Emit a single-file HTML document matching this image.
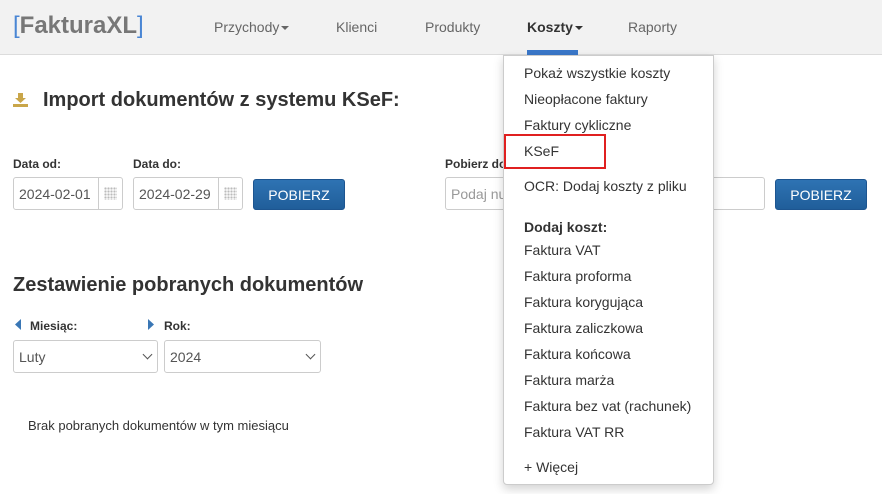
<!DOCTYPE html>
<html><head><meta charset="utf-8"><style>
*{box-sizing:border-box;margin:0;padding:0}
body{width:882px;height:494px;overflow:hidden;background:#fff;font-family:"Liberation Sans",Arial,sans-serif;color:#333;position:relative}
.a{position:absolute;white-space:nowrap}
.nav{position:absolute;left:0;top:0;width:882px;height:55px;background:#f2f2f2;border-bottom:1px solid #dcdcdc}
.nl{font-size:14px;color:#666;top:19px}
.caret{display:inline-block;width:0;height:0;border-left:4px solid transparent;border-right:4px solid transparent;border-top:4px solid #666;vertical-align:middle;margin-left:2px}
.lbl{font-size:12px;font-weight:bold;color:#333}
.inp{position:absolute;height:33px;border:1px solid #ccc;border-radius:3px;background:#fff;font-size:14px;color:#555;padding:8px 5px}
.btn{position:absolute;height:31px;border-radius:3px;background:linear-gradient(#2e73b3,#205e9a);color:#fff;font-size:14px;text-align:center;line-height:31px;border:1px solid #1d5590}
.cal{position:absolute;right:0;top:0;width:24px;height:31px;border-left:1px solid #ccc;background:radial-gradient(circle,#bbb 1px,transparent 1.3px) 5px 9px/3px 3px;background-repeat:repeat;background-clip:content-box;padding:9px 5px}
.dd{position:absolute;left:503px;top:55px;width:211px;height:430px;background:#fff;border:1px solid #ccc;border-radius:0 0 4px 4px;box-shadow:0 4px 10px rgba(0,0,0,.18)}
.di{position:absolute;left:20px;font-size:14px;color:#333}
.sel{position:absolute;height:33px;border:1px solid #ccc;border-radius:3px;font-size:14px;color:#555;padding:8px 5px}
.chev{position:absolute;right:6px;top:10px;width:7px;height:7px;border-right:1.5px solid #555;border-bottom:1.5px solid #555;transform:rotate(45deg)}
</style></head><body>
<div class="nav"></div>
<div class="a" style="left:13px;top:12px;font-size:24px;font-weight:bold;color:#777"><span style="color:#4a86d4;font-weight:normal">[</span>FakturaXL<span style="color:#4a86d4;font-weight:normal">]</span></div>
<div class="a nl" style="left:214px">Przychody<span class="caret"></span></div>
<div class="a nl" style="left:336px">Klienci</div>
<div class="a nl" style="left:425px">Produkty</div>
<div class="a nl" style="left:527px;color:#333;font-weight:bold">Koszty<span class="caret" style="border-top-color:#333"></span></div>
<div class="a nl" style="left:628px">Raporty</div>
<div class="a" style="left:527px;top:50px;width:51px;height:5px;background:#3a77c9"></div>

<svg class="a" style="left:13px;top:93px" width="15" height="14" viewBox="0 0 15 14"><path d="M5 0h5v5h3l-5.5 5L2 5h3z" fill="#c9a64a"/><rect x="0" y="11" width="15" height="3" fill="#c9a64a"/></svg>
<div class="a" style="left:43px;top:89px;font-size:20px;font-weight:bold;color:#333">Import dokumentów z systemu KSeF:</div>

<div class="a lbl" style="left:13px;top:157px">Data od:</div>
<div class="a lbl" style="left:133px;top:157px">Data do:</div>
<div class="a lbl" style="left:445px;top:157px">Pobierz do</div>
<div class="inp" style="left:13px;top:177px;width:110px">2024-02-01<div class="cal"></div></div>
<div class="inp" style="left:133px;top:177px;width:110px">2024-02-29<div class="cal"></div></div>
<div class="btn" style="left:253px;top:179px;width:92px">POBIERZ</div>
<div class="inp" style="left:445px;top:177px;width:320px;color:#999">Podaj nu</div>
<div class="btn" style="left:775px;top:179px;width:92px">POBIERZ</div>

<div class="a" style="left:13px;top:274px;font-size:20px;font-weight:bold;color:#333">Zestawienie pobranych dokumentów</div>
<svg class="a" style="left:15px;top:319px" width="6" height="11"><path d="M6 0v11L0 5.5z" fill="#3a77b5"/></svg>
<div class="a lbl" style="left:30px;top:319px">Miesiąc:</div>
<svg class="a" style="left:148px;top:319px" width="6" height="11"><path d="M0 0v11l6-5.5z" fill="#3a77b5"/></svg>
<div class="a lbl" style="left:164px;top:319px">Rok:</div>
<div class="sel" style="left:13px;top:340px;width:145px">Luty<div class="chev"></div></div>
<div class="sel" style="left:164px;top:340px;width:157px">2024<div class="chev"></div></div>
<div class="a" style="left:28px;top:418px;font-size:13px;color:#333">Brak pobranych dokumentów w tym miesiącu</div>

<div class="dd">
<div class="di" style="top:9px">Pokaż wszystkie koszty</div>
<div class="di" style="top:35px">Nieopłacone faktury</div>
<div class="di" style="top:61px">Faktury cykliczne</div>
<div class="di" style="top:87px">KSeF</div>
<div class="di" style="top:122px">OCR: Dodaj koszty z pliku</div>
<div class="di" style="top:163px;font-weight:bold">Dodaj koszt:</div>
<div class="di" style="top:186px">Faktura VAT</div>
<div class="di" style="top:212px">Faktura proforma</div>
<div class="di" style="top:238px">Faktura korygująca</div>
<div class="di" style="top:264px">Faktura zaliczkowa</div>
<div class="di" style="top:290px">Faktura końcowa</div>
<div class="di" style="top:316px">Faktura marża</div>
<div class="di" style="top:342px">Faktura bez vat (rachunek)</div>
<div class="di" style="top:368px">Faktura VAT RR</div>
<div class="di" style="top:403px">+ Więcej</div>
</div>
<div class="a" style="left:504px;top:134px;width:102px;height:35px;border:2px solid #e02020"></div>
</body></html>
